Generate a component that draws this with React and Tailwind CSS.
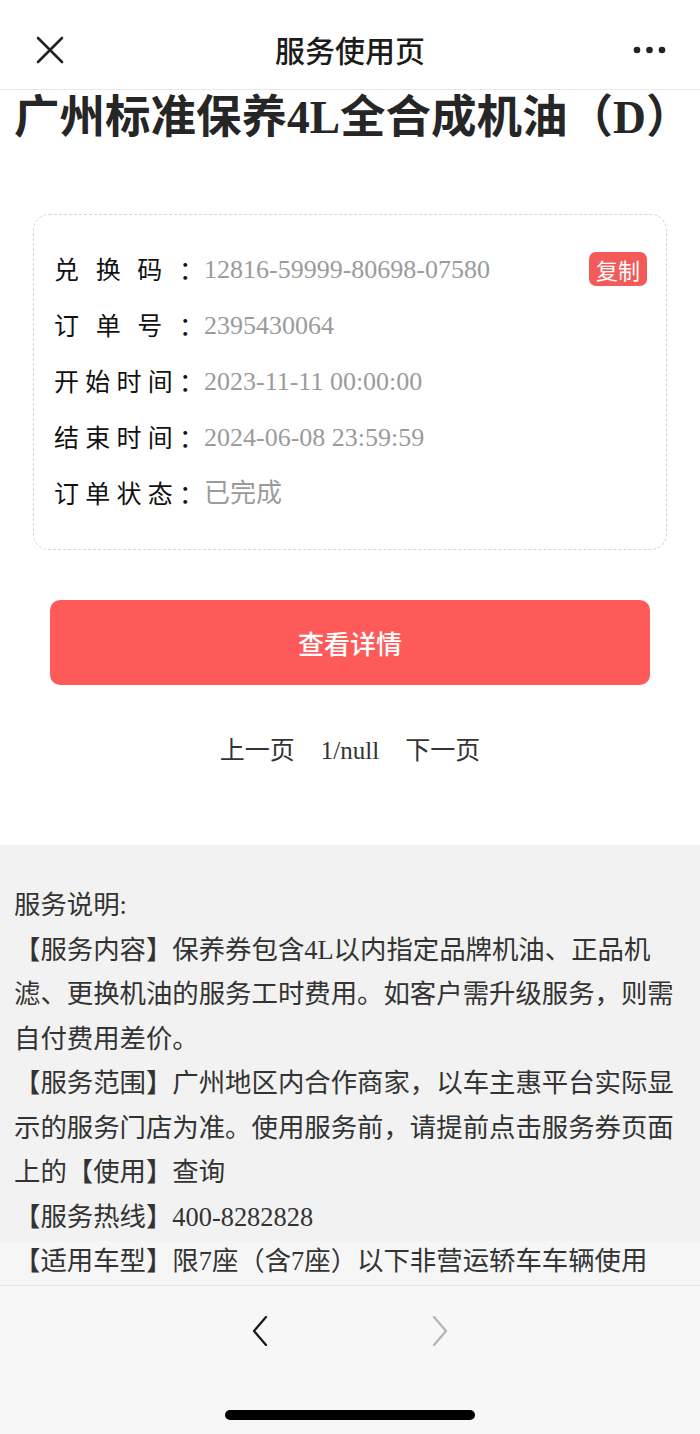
import React from "react";

const serif = "font-['Liberation_Serif','Noto_Sans_CJK_SC',serif]";
const sans = "font-['Noto_Sans_CJK_SC','Noto_Sans',sans-serif]";

const rows = [
  { label: ["兑", "换", "码", "："], value: "12816-59999-80698-07580", copy: true },
  { label: ["订", "单", "号", "："], value: "2395430064" },
  { label: ["开", "始", "时", "间", "："], value: "2023-11-11 00:00:00" },
  { label: ["结", "束", "时", "间", "："], value: "2024-06-08 23:59:59" },
  { label: ["订", "单", "状", "态", "："], value: "已完成" },
];

const notes = [
  "服务说明:",
  "【服务内容】保养券包含4L以内指定品牌机油、正品机滤、更换机油的服务工时费用。如客户需升级服务，则需自付费用差价。",
  "【服务范围】广州地区内合作商家，以车主惠平台实际显示的服务门店为准。使用服务前，请提前点击服务券页面上的【使用】查询",
  "【服务热线】400-8282828",
  "【适用车型】限7座（含7座）以下非营运轿车车辆使用",
];

const Header = () => (
  <div className="h-[90px] shrink-0 grid grid-cols-[120px_1fr_120px] items-center pt-[10px] border-b border-[#e8e8e8] bg-white">
    <div className="pl-[36px]">
      <svg width="28" height="28" viewBox="0 0 28 28">
        <path d="M2 2 L26 26 M26 2 L2 26" stroke="#222" strokeWidth="2.6" strokeLinecap="round" />
      </svg>
    </div>
    <div className={`text-center text-[30px] font-medium text-[#1c1c1c] ${sans}`}>服务使用页</div>
    <div className="flex justify-end pr-[34px]">
      <svg width="33" height="8" viewBox="0 0 33 8">
        <circle cx="4" cy="4" r="3.3" fill="#222" />
        <circle cx="16.5" cy="4" r="3.3" fill="#222" />
        <circle cx="29" cy="4" r="3.3" fill="#222" />
      </svg>
    </div>
  </div>
);

const Chevron = ({ dir, color }) => (
  <svg width="16" height="30" viewBox="0 0 16 30">
    <polyline
      points={dir === "left" ? "14,1 2,15 14,29" : "2,1 14,15 2,29"}
      fill="none"
      stroke={color}
      strokeWidth="2.3"
      strokeLinecap="round"
      strokeLinejoin="round"
    />
  </svg>
);

const App = () => {
  return (
    <div className="w-[700px] h-[1434px] flex flex-col overflow-hidden bg-white">
      <Header />

      <div className="flex-1 flex flex-col overflow-hidden">
        <h1 className={`px-[14px] pt-[1px] text-[45.5px] leading-[53px] font-bold text-[#262626] whitespace-nowrap ${serif}`}>
          广州标准保养4L全合成机油（D）
        </h1>

        <div className="mx-[33px] mt-[70px] border border-dashed border-[#d6d6d6] rounded-[16px] pt-[26px] pb-[28px] pl-[20px] pr-[19px]">
          {rows.map((row, i) => (
            <div key={i} className="h-[56px] flex items-center">
              <div className={`w-[150px] flex justify-between text-[25px] text-[#111] ${sans}`}>
                {row.label.map((c, j) => (
                  <span key={j}>{c}</span>
                ))}
              </div>
              <div className={`flex-1 text-[26px] text-[#9b9b9b] ${serif}`}>{row.value}</div>
              {row.copy && (
                <div className={`w-[58px] h-[34px] rounded-[7px] bg-[#f35a5a] text-white text-[22px] flex items-center justify-center ${sans}`}>
                  复制
                </div>
              )}
            </div>
          ))}
        </div>

        <button className={`mx-[50px] mt-[50px] h-[85px] shrink-0 rounded-[10px] bg-[#fe5a5a] text-white text-[26px] font-medium flex items-center justify-center ${sans}`}>
          查看详情
        </button>

        <div className={`mt-[48px] flex justify-center gap-[26px] text-[25px] leading-[36px] text-[#333] ${serif}`}>
          <span>上一页</span>
          <span>1/null</span>
          <span>下一页</span>
        </div>

        <div className={`mt-[76px] flex-1 pt-[38px] px-[14px] text-[26.4px] leading-[44.5px] text-[#333] bg-[linear-gradient(to_top,#f6f6f6_44px,#f2f2f2_44px)] ${serif}`}>
          {notes.map((n, i) => (
            <p key={i}>{n}</p>
          ))}
        </div>
      </div>

      <div className="h-[149px] shrink-0 bg-[#f7f7f7] border-t border-[#e4e4e4] flex flex-col items-center">
        <div className="pt-[30px] flex gap-[164px]">
          <Chevron dir="left" color="#1a1a1a" />
          <Chevron dir="right" color="#b5b5b5" />
        </div>
        <div className="mt-[64px] w-[250px] h-[10px] rounded-full bg-black" />
      </div>
    </div>
  );
};

export default App;
